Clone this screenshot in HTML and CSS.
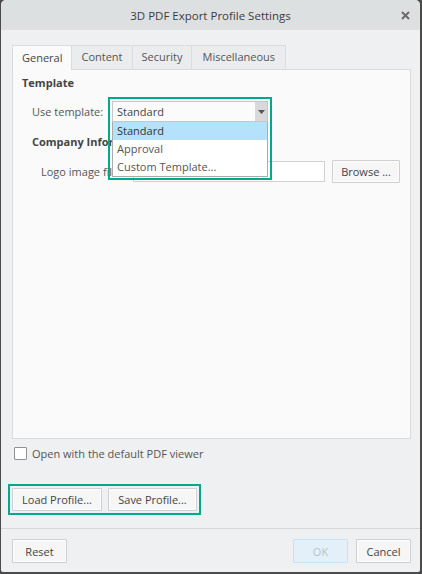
FILE: index.html
```html
<!DOCTYPE html>
<html lang="en">
<head>
    <meta charset="UTF-8">
    <meta name="viewport" content="width=device-width, initial-scale=1.0">
    <title>3D PDF Export Profile Settings</title>
    <link rel="stylesheet" href="styles.css">
</head>
<body>
    <div class="dialog">
        <div class="titlebar">
            <span class="title">3D PDF Export Profile Settings</span>
            <span class="close">
                <svg width="9" height="9" viewBox="0 0 9 9">
                    <path d="M1 1L8 8M8 1L1 8" stroke="#6b6b6b" stroke-width="2" fill="none"/>
                </svg>
            </span>
        </div>

        <div class="main">
            <div class="tabs">
                <div class="tab active">General</div>
                <div class="tab">Content</div>
                <div class="tab">Security</div>
                <div class="tab">Miscellaneous</div>
            </div>

            <div class="panel">
                <div class="section-title">Template</div>
                <div class="form-row">
                    <span class="label">Use template:</span>
                    <div class="combo-wrap">
                        <div class="combo">
                            <span class="combo-value">Standard</span>
                            <span class="combo-arrow">
                                <svg width="7" height="4" viewBox="0 0 7 4"><path d="M0 0H7L3.5 4Z" fill="#555"/></svg>
                            </span>
                        </div>
                        <ul class="combo-list">
                            <li class="selected">Standard</li>
                            <li>Approval</li>
                            <li>Custom Template...</li>
                        </ul>
                        <div class="focus-mark"></div>
                    </div>
                </div>

                <div class="section-title sub">Company Information</div>
                <div class="form-row logo-row">
                    <span class="label wide">Logo image file:</span>
                    <div class="text-input"></div>
                    <button class="btn browse">Browse ...</button>
                </div>
            </div>

            <div class="check-row">
                <span class="checkbox"></span>
                <span>Open with the default PDF viewer</span>
            </div>

            <div class="profile-group">
                <button class="btn load">Load Profile...</button>
                <button class="btn save">Save Profile...</button>
            </div>
        </div>

        <div class="footer">
            <button class="btn reset">Reset</button>
            <span class="spacer"></span>
            <button class="btn ok" disabled>OK</button>
            <button class="btn cancel">Cancel</button>
        </div>
    </div>
</body>
</html>
```

FILE: styles.css
```css
* {
    box-sizing: border-box;
}
body {
    margin: 0;
    background-color: #4b4b4b;
    font-family: "Open Sans", "Noto Sans", sans-serif;
    font-size: 11px;
    color: #4a4a4a;
}
.dialog {
    width: 419px;
    height: 572px;
    margin-left: 1px;
    background-color: #eff0f1;
    border-radius: 5px 5px 2px 2px;
    overflow: hidden;
    display: flex;
    flex-direction: column;
}

/* title bar */
.titlebar {
    height: 30px;
    flex: none;
    background-color: #dde0e1;
    display: flex;
    align-items: center;
    justify-content: center;
    position: relative;
}
.title {
    font-size: 11.5px;
    color: #3c3c3c;
}
.close {
    position: absolute;
    right: 10px;
    top: 11px;
    display: flex;
}

/* tabs + page */
.main {
    padding: 15px 9px 0 11px;
    flex: none;
}
.tabs {
    display: flex;
    align-items: flex-start;
    height: 24px;
}
.tab {
    height: 24px;
    line-height: 22px;
    padding: 0 9px;
    background-color: #eaeced;
    border: 1px solid #dadcdd;
    border-bottom: none;
    margin-left: -1px;
    color: #555;
}
.tab:first-child {
    margin-left: 0;
}
.tab:last-child {
    padding: 0 10px;
}
.tab.active {
    position: relative;
    z-index: 1;
    height: 25px;
    padding-top: 1px;
    background-color: #fafafa;
    color: #444;
}
.panel {
    height: 370px;
    background-color: #fafafa;
    border: 1px solid #d9dadb;
    padding-top: 5px;
}
.section-title {
    height: 16px;
    line-height: 16px;
    padding-left: 9px;
    font-weight: bold;
    color: #444;
}
.section-title.sub {
    margin-top: 12px;
    padding-left: 19px;
}
.form-row {
    display: flex;
    align-items: center;
    margin-top: 10px;
    padding-left: 19px;
    height: 21px;
}
.label {
    width: 80px;
    flex: none;
    white-space: nowrap;
    color: #555;
}
.logo-row {
    padding-left: 28px;
    height: 23px;
}
.label.wide {
    width: 92px;
}

/* combo box with its list opened */
.combo-wrap {
    position: relative;
    z-index: 2;
    width: 156px;
    height: 21px;
}
.combo {
    height: 21px;
    display: flex;
    border: 1px solid #c4c6c7;
    background-color: #fbfbfb;
}
.combo-value {
    flex: 1;
    line-height: 19px;
    padding-left: 4px;
    color: #444;
}
.combo-arrow {
    width: 12px;
    background-color: #d8d9da;
    display: flex;
    align-items: center;
    justify-content: center;
}
.combo-list {
    position: absolute;
    top: 21px;
    left: 0;
    width: 156px;
    margin: 0;
    padding: 0;
    list-style: none;
    background-color: #fff;
    border: 1px solid #a9abac;
    border-top: none;
}
.combo-list li {
    height: 18px;
    line-height: 18px;
    padding-left: 4px;
    color: #555;
}
.combo-list li.selected {
    background-color: #b4e1fb;
    color: #333;
}
.focus-mark {
    position: absolute;
    top: -4px;
    left: -4px;
    width: 164px;
    height: 83px;
    border: 2px solid #00a98b;
    pointer-events: none;
}

.text-input {
    width: 192px;
    height: 21px;
    background-color: #fff;
    border: 1px solid #cfd1d2;
}

/* buttons */
.btn {
    height: 23px;
    padding: 0;
    font-family: inherit;
    font-size: 11px;
    color: #444;
    background-color: #f6f6f6;
    border: 1px solid #cdcfd0;
    box-shadow: inset 0 0 0 1px #fdfdfd;
    border-radius: 1px;
}
.browse {
    width: 68px;
    margin-left: 7px;
}

.check-row {
    display: flex;
    align-items: center;
    margin-top: 7px;
    height: 14px;
    padding-left: 2px;
    color: #555;
}
.checkbox {
    width: 13px;
    height: 13px;
    margin-right: 5px;
    background-color: #fff;
    border: 1px solid #8f9193;
    border-radius: 1px;
}

.profile-group {
    display: inline-flex;
    gap: 6px;
    margin-top: 24px;
    margin-left: -4px;
    padding: 2px;
    border: 2px solid #00a98b;
}
.load {
    width: 90px;
}
.save {
    width: 89px;
}

/* bottom row */
.footer {
    margin-top: 13px;
    border-top: 1px solid #d4d6d7;
    padding: 10px 9px 0 11px;
    display: flex;
    gap: 8px;
}
.footer .btn {
    height: 24px;
    width: 55px;
}
.spacer {
    flex: 1;
}
.btn.ok {
    background-color: #e3f0f9;
    border-color: #c9e2f3;
    box-shadow: none;
    color: #b9c3ca;
}
```
